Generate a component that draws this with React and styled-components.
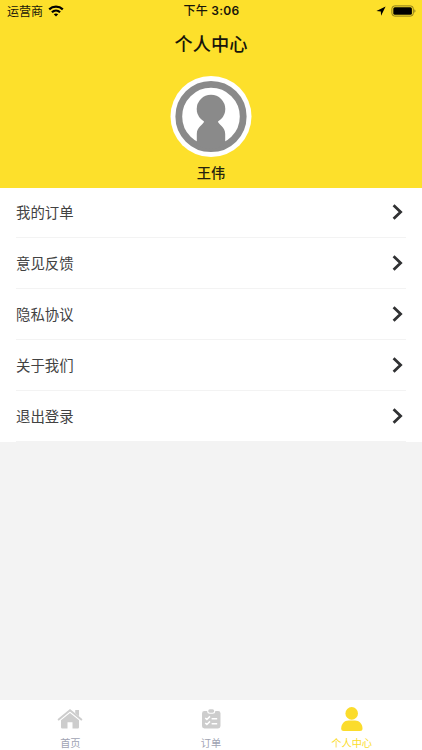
import styled, { createGlobalStyle } from "styled-components";

const GlobalStyle = createGlobalStyle`
  body {
    margin: 0;
    font-family: "Noto Sans CJK SC", sans-serif;
  }
`;

const Page = styled.div`
  height: 750px;
  display: flex;
  flex-direction: column;
  overflow: hidden;
  background-color: #f3f3f3;
`;

const Header = styled.header`
  height: 187.5px;
  flex-shrink: 0;
  display: flex;
  flex-direction: column;
  align-items: center;
  background-color: #fde02b;
`;

const StatusBar = styled.div`
  width: 100%;
  height: 22px;
  box-sizing: border-box;
  padding: 0 6px 0 7px;
  display: grid;
  grid-template-columns: 1fr auto 1fr;
  align-items: center;
  color: #17150a;
  font-size: 12px;
  line-height: 22px;
`;

const StatusGroup = styled.div`
  display: flex;
  align-items: center;
  justify-content: ${(props) => (props.$end ? "flex-end" : "flex-start")};
  gap: 5px;
`;

const Time = styled.div`
  font-family: Inter, "Noto Sans CJK SC", sans-serif;
  font-weight: 600;
  letter-spacing: 0.25px;
`;

const Meridiem = styled.span`
  font-weight: 500;
`;

const Title = styled.h1`
  margin: 0;
  height: 43px;
  color: #17150a;
  font-size: 18.2px;
  font-weight: 500;
  line-height: 43px;
`;

const Avatar = styled.svg`
  display: block;
  margin-top: 11px;
`;

const UserName = styled.div`
  margin-top: 5px;
  color: #25220e;
  font-size: 14.2px;
  font-weight: 500;
  line-height: 21px;
`;

const Menu = styled.ul`
  margin: 0;
  padding: 0 16px;
  list-style: none;
  background-color: #fff;
`;

const MenuItem = styled.li`
  height: 50.9px;
  box-sizing: border-box;
  padding-right: 2px;
  display: flex;
  align-items: center;
  justify-content: space-between;
  border-bottom: 1px solid #f3f3f3;
  color: #424242;
  font-size: 14.4px;
  line-height: 20px;
`;

const TabBar = styled.nav`
  height: 50.5px;
  flex-shrink: 0;
  margin-top: auto;
  display: flex;
  background-color: #fff;
`;

const Tab = styled.div`
  flex: 1;
  display: flex;
  flex-direction: column;
  align-items: center;
  padding-top: 6.5px;
  color: ${(props) => (props.$active ? "#fbdc2c" : "#a0a3b2")};
  font-size: 10.2px;
  line-height: 15px;

  svg {
    display: block;
    margin-bottom: 2px;
  }
`;

const WifiIcon = () => (
  <svg width="16" height="12" viewBox="0 0 16 12" fill="none" stroke="#000" strokeWidth="2.2">
    <path d="M1.2 4.4C5 .8 11 .8 14.8 4.4" />
    <path d="M3.9 7.2C6.2 5.1 9.8 5.1 12.1 7.2" />
    <path d="M8 11.5L5.8 9.3C7 8.2 9 8.2 10.2 9.3Z" fill="#000" stroke="none" />
  </svg>
);

const LocationIcon = () => (
  <svg width="10" height="10" viewBox="0 0 10 10">
    <path d="M9.6.6L.4 5.1L4.8 5.4L5.1 9.7Z" fill="#000" />
  </svg>
);

const BatteryIcon = () => (
  <svg width="25" height="12" viewBox="0 0 25 12">
    <rect x=".9" y=".9" width="21.4" height="10.2" rx="2.8" fill="none" stroke="#8b7c1d" />
    <rect x="2.3" y="2.3" width="18.6" height="7.4" rx="1.5" fill="#000" />
    <path d="M23.4 4.2C24.8 4.8 24.8 7.2 23.4 7.8Z" fill="#8b7c1d" />
  </svg>
);

const ChevronIcon = () => (
  <svg width="12" height="16" viewBox="0 0 12 16">
    <path
      d="M2.6 2.3L8.6 8L2.6 13.7"
      fill="none"
      stroke="#303133"
      strokeWidth="2.8"
      strokeLinecap="square"
    />
  </svg>
);

const HomeIcon = () => (
  <svg width="26" height="27" viewBox="0 0 26 27" fill="#cdcdcd">
    <path d="M1.7 13.5L13 4.2L24.3 13.5" fill="none" stroke="#cdcdcd" strokeWidth="2" strokeLinecap="round" />
    <path d="M18.2 4H22V10.3L18.2 7.2Z" />
    <path d="M13 6.9L22 14.3V21.3Q22 22.5 20.8 22.5H15.5V16.2H10.5V22.5H5.2Q4 22.5 4 21.3V14.3Z" />
  </svg>
);

const OrderIcon = () => (
  <svg width="26" height="27" viewBox="0 0 26 27">
    <rect x="4" y="5" width="18.5" height="17.4" rx="2.4" fill="#cdcdcd" />
    <rect x="9.2" y="2.3" width="8" height="5.5" rx="2.5" fill="#fff" />
    <rect x="10.2" y="3.3" width="6" height="3.5" rx="1.7" fill="#cdcdcd" />
    <path
      d="M7.2 12L8.9 13.5L12 10.4M7.2 17L8.9 18.5L12 15.4M13.6 12.7H19.2M13.6 17.7H19.2"
      fill="none"
      stroke="#fff"
      strokeWidth="1.5"
    />
  </svg>
);

const UserIcon = () => (
  <svg width="26" height="27" viewBox="0 0 26 27" fill="#fbdc2c">
    <circle cx="12.7" cy="7.4" r="6.3" />
    <path d="M2.2 22.5C2.2 17.8 5.4 14.5 9.5 14.5H16C20.2 14.5 23.5 17.8 23.5 22.5Q23.5 25 21 25H4.7Q2.2 25 2.2 22.5Z" />
  </svg>
);

const menuItems = ["我的订单", "意见反馈", "隐私协议", "关于我们", "退出登录"];

const App = () => {
  return (
    <Page>
      <GlobalStyle />
      <Header>
        <StatusBar>
          <StatusGroup>
            <span>运营商</span>
            <WifiIcon />
          </StatusGroup>
          <Time>
            <Meridiem>下午</Meridiem> 3:06
          </Time>
          <StatusGroup $end>
            <LocationIcon />
            <BatteryIcon />
          </StatusGroup>
        </StatusBar>
        <Title>个人中心</Title>
        <Avatar width="82" height="81" viewBox="0 0 82 81">
          <circle cx="41" cy="40.5" r="40.5" fill="#fff" />
          <circle cx="41" cy="40.5" r="32.2" fill="none" stroke="#8a8a8a" strokeWidth="6.8" />
          <circle cx="41" cy="33" r="14.3" fill="#8a8a8a" />
          <path
            d="M34 45H48C48 49 55.2 50 55.2 58V69Q41 76 26.8 69V58C26.8 50 34 49 34 45Z"
            fill="#8a8a8a"
          />
        </Avatar>
        <UserName>王伟</UserName>
      </Header>
      <Menu>
        {menuItems.map((item) => (
          <MenuItem key={item}>
            <span>{item}</span>
            <ChevronIcon />
          </MenuItem>
        ))}
      </Menu>
      <TabBar>
        <Tab>
          <HomeIcon />
          <span>首页</span>
        </Tab>
        <Tab>
          <OrderIcon />
          <span>订单</span>
        </Tab>
        <Tab $active>
          <UserIcon />
          <span>个人中心</span>
        </Tab>
      </TabBar>
    </Page>
  );
};

export default App;
